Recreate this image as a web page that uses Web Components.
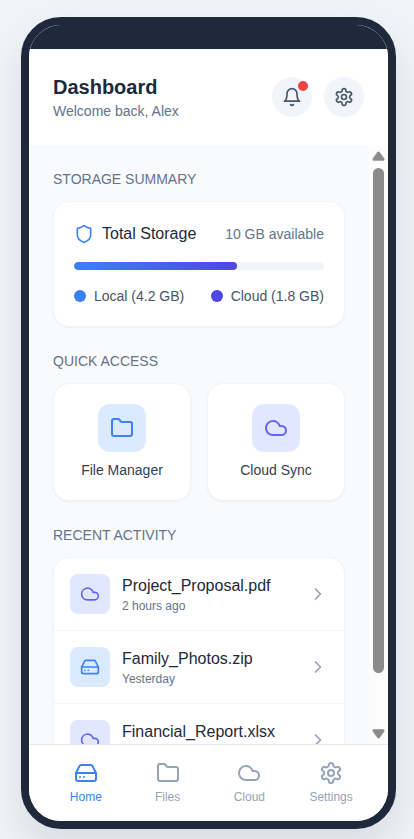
<!DOCTYPE html>
<html lang="en">
<head>
<meta charset="utf-8">
<title>Dashboard</title>
<style>
html, body { margin: 0; height: 839px; overflow: hidden; }
body {
  background: #f0f4f8;
  font-family: "Liberation Sans", Arial, sans-serif;
  display: flex;
  box-sizing: border-box;
  padding: 17px 0 0 21px;
}
</style>
</head>
<body>
<phone-frame>
  <app-header heading="Dashboard" sub="Welcome back, Alex">
    <round-button icon="bell" alert></round-button>
    <round-button icon="settings"></round-button>
  </app-header>
  <scroll-area>
    <page-section heading="Storage Summary">
      <storage-card></storage-card>
    </page-section>
    <page-section heading="Quick Access">
      <tile-grid>
        <quick-tile icon="folder" tone="blue">File Manager</quick-tile>
        <quick-tile icon="cloud" tone="indigo">Cloud Sync</quick-tile>
      </tile-grid>
    </page-section>
    <page-section heading="Recent Activity">
      <activity-list>
        <activity-item icon="cloud" tone="indigo" when="2 hours ago">Project_Proposal.pdf</activity-item>
        <activity-item icon="drive" tone="blue" when="Yesterday">Family_Photos.zip</activity-item>
        <activity-item icon="cloud" tone="indigo">Financial_Report.xlsx</activity-item>
      </activity-list>
    </page-section>
  </scroll-area>
  <bottom-nav>
    <nav-item icon="drive" active>Home</nav-item>
    <nav-item icon="folder">Files</nav-item>
    <nav-item icon="cloud">Cloud</nav-item>
    <nav-item icon="settings">Settings</nav-item>
  </bottom-nav>
</phone-frame>
<script>
const ICONS = {
  bell: '<path d="M6 8a6 6 0 0 1 12 0c0 7 3 9 3 9H3s3-2 3-9"/><path d="M10.3 21a1.94 1.94 0 0 0 3.4 0"/>',
  settings: '<path d="M12.22 2h-.44a2 2 0 0 0-2 2v.18a2 2 0 0 1-1 1.73l-.43.25a2 2 0 0 1-2 0l-.15-.08a2 2 0 0 0-2.73.73l-.22.38a2 2 0 0 0 .73 2.73l.15.1a2 2 0 0 1 1 1.72v.51a2 2 0 0 1-1 1.74l-.15.09a2 2 0 0 0-.73 2.73l.22.38a2 2 0 0 0 2.73.73l.15-.08a2 2 0 0 1 2 0l.43.25a2 2 0 0 1 1 1.73V20a2 2 0 0 0 2 2h.44a2 2 0 0 0 2-2v-.18a2 2 0 0 1 1-1.73l.43-.25a2 2 0 0 1 2 0l.15.08a2 2 0 0 0 2.73-.73l.22-.39a2 2 0 0 0-.73-2.73l-.15-.08a2 2 0 0 1-1-1.74v-.5a2 2 0 0 1 1-1.74l.15-.09a2 2 0 0 0 .73-2.73l-.22-.38a2 2 0 0 0-2.73-.73l-.15.08a2 2 0 0 1-2 0l-.43-.25a2 2 0 0 1-1-1.73V4a2 2 0 0 0-2-2z"/><circle cx="12" cy="12" r="3"/>',
  shield: '<path d="M20 13c0 5-3.5 7.5-7.66 8.95a1 1 0 0 1-.67-.01C7.5 20.5 4 18 4 13V6a1 1 0 0 1 1-1c2 0 4.5-1.2 6.24-2.72a1.17 1.17 0 0 1 1.52 0C14.51 3.81 17 5 19 5a1 1 0 0 1 1 1z"/>',
  folder: '<path d="M20 20a2 2 0 0 0 2-2V8a2 2 0 0 0-2-2h-7.9a2 2 0 0 1-1.69-.9L9.6 3.9A2 2 0 0 0 7.93 3H4a2 2 0 0 0-2 2v13a2 2 0 0 0 2 2Z"/>',
  cloud: '<path d="M17.5 19H9a7 7 0 1 1 6.71-9h1.79a4.5 4.5 0 1 1 0 9Z"/>',
  drive: '<line x1="22" x2="2" y1="12" y2="12"/><path d="M5.45 5.11 2 12v6a2 2 0 0 0 2 2h16a2 2 0 0 0 2-2v-6l-3.45-6.89A2 2 0 0 0 16.76 4H7.24a2 2 0 0 0-1.79 1.11z"/><line x1="6" x2="6.01" y1="16" y2="16"/><line x1="10" x2="10.01" y1="16" y2="16"/>',
  chevron: '<path d="m9 18 6-6-6-6"/>'
};

const define = (name, render) => customElements.define(name, class extends HTMLElement {
  connectedCallback() {
    if (this.shadowRoot) return;
    this.attachShadow({ mode: 'open' }).innerHTML = render(this);
  }
});
const attr = (el, name) => el.getAttribute(name) || '';

define('line-icon', el => `<style>
  :host { display: block; flex: none; width: var(--size, 20px); height: var(--size, 20px); }
  svg { display: block; width: 100%; height: 100%; }
</style><svg viewBox="0 0 24 24" fill="none" stroke="currentColor" stroke-width="2" stroke-linecap="round" stroke-linejoin="round">${ICONS[attr(el, 'name')]}</svg>`);

define('phone-frame', () => `<style>
  :host { display: flex; flex-direction: column; flex: none; box-sizing: border-box; width: 375px; height: 812px;
    border: 8px solid #1e293b; border-radius: 40px; overflow: hidden; background: #fff;
    box-shadow: 0 20px 40px rgba(0,0,0,.1); }
  .status { flex: none; height: 24px; background: #1e293b; }
</style><div class="status"></div><slot></slot>`);

define('app-header', el => `<style>
  :host { display: flex; flex: none; justify-content: space-between; align-items: center; padding: 24px; background: #fff; }
  h1 { margin: 0; font-size: 20px; line-height: 28px; font-weight: 700; color: #1e293b; }
  p { margin: 0; font-size: 14px; line-height: 20px; color: #64748b; }
  .actions { display: flex; gap: 12px; }
</style><div><h1>${attr(el, 'heading')}</h1><p>${attr(el, 'sub')}</p></div><div class="actions"><slot></slot></div>`);

define('round-button', el => `<style>
  :host { position: relative; display: grid; place-items: center; width: 40px; height: 40px; border-radius: 50%;
    background: #f1f5f9; color: #475569; }
  .dot { position: absolute; top: 4px; right: 4px; width: 10px; height: 10px; border-radius: 50%; background: #ef4444; }
</style><line-icon name="${attr(el, 'icon')}"></line-icon>${el.hasAttribute('alert') ? '<span class="dot"></span>' : ''}`);

define('scroll-area', () => `<style>
  :host { display: flex; flex: 1; min-height: 0; overflow: hidden; background: #f8fafc; }
  .content { flex: 1; min-width: 0; padding: 24px; display: flex; flex-direction: column; gap: 24px; }
  .bar { flex: none; box-sizing: border-box; width: 19px; background: #fcfcfc; padding: 6px 0 5px;
    display: flex; flex-direction: column; align-items: center; }
  .thumb { width: 11px; height: 505px; margin-top: 7px; border-radius: 5.5px; background: #8b8b8b; }
  svg { display: block; width: 13px; height: 10px; fill: #8b8b8b; }
  .down { margin-top: auto; }
</style><div class="content"><slot></slot></div>
<div class="bar">
  <svg viewBox="0 0 13 10"><path d="M5.3 1.2Q6.5-.2 7.7 1.2L12.3 7.6Q12.8 9.7 11.3 9.8H1.7Q.2 9.7.7 7.6Z"/></svg>
  <div class="thumb"></div>
  <svg class="down" viewBox="0 0 13 10"><path d="M5.3 8.8Q6.5 10.2 7.7 8.8L12.3 2.4Q12.8 .3 11.3 .2H1.7Q.2 .3 .7 2.4Z"/></svg>
</div>`);

define('page-section', el => `<style>
  :host { display: block; flex: none; }
  h2 { margin: 0 0 12px; font-size: 14px; line-height: 20px; font-weight: 400; color: #64748b; text-transform: uppercase; }
</style><h2>${attr(el, 'heading')}</h2><slot></slot>`);

const CARD = `box-sizing: border-box; background: #fff; border: 1px solid #f1f5f9; border-radius: 16px; box-shadow: 0 1px 2px rgba(0,0,0,.05);`;

define('storage-card', () => `<style>
  :host { display: flex; flex-direction: column; gap: 16px; padding: 20px; ${CARD} font-size: 14px; line-height: 20px; }
  .row, .name, .key { display: flex; align-items: center; }
  .row { justify-content: space-between; }
  .name { gap: 8px; font-size: 16px; line-height: 24px; color: #1e293b; }
  line-icon { color: #3b82f6; }
  .free { color: #64748b; }
  .track { height: 8px; border-radius: 4px; background: #f1f5f9; overflow: hidden; }
  .fill { height: 100%; width: 65%; border-radius: 4px; background: linear-gradient(90deg, #3b82f6, #4f46e5); }
  .key { gap: 8px; color: #475569; }
  .key i { width: 12px; height: 12px; border-radius: 50%; background: #3b82f6; }
  .key.cloud i { background: #4f46e5; }
</style>
<div class="row"><div class="name"><line-icon name="shield"></line-icon><span>Total Storage</span></div><span class="free">10 GB available</span></div>
<div class="track"><div class="fill"></div></div>
<div class="row"><div class="key"><i></i><span>Local (4.2 GB)</span></div><div class="key cloud"><i></i><span>Cloud (1.8 GB)</span></div></div>`);

define('tile-grid', () => `<style>
  :host { display: grid; grid-template-columns: 1fr 1fr; gap: 16px; }
</style><slot></slot>`);

define('icon-badge', el => `<style>
  :host { display: grid; place-items: center; flex: none; }
  :host([tone=blue]) { background: #dbeafe; color: #3b82f6; }
  :host([tone=indigo]) { background: #e0e7ff; color: #6366f1; }
</style><line-icon name="${attr(el, 'icon')}"></line-icon>`);

define('quick-tile', el => `<style>
  :host { display: flex; flex-direction: column; align-items: center; gap: 8px; padding: 20px; ${CARD}
    font-size: 14px; line-height: 20px; color: #334155; }
  icon-badge { width: 48px; height: 48px; border-radius: 12px; --size: 24px; }
</style><icon-badge icon="${attr(el, 'icon')}" tone="${attr(el, 'tone')}"></icon-badge><span><slot></slot></span>`);

define('activity-list', () => `<style>
  :host { display: block; ${CARD} overflow: hidden; }
</style><slot></slot>`);

define('activity-item', el => `<style>
  :host { display: flex; align-items: center; gap: 12px; padding: 16px; border-bottom: 1px solid #f1f5f9; }
  :host(:last-child) { border-bottom: 0; }
  icon-badge { width: 40px; height: 40px; border-radius: 8px; }
  .text { flex: 1; min-width: 0; }
  .title { font-size: 16px; line-height: 24px; color: #1e293b; }
  .when { font-size: 12px; line-height: 16px; min-height: 16px; color: #64748b; }
  .go { color: #94a3b8; }
</style><icon-badge icon="${attr(el, 'icon')}" tone="${attr(el, 'tone')}"></icon-badge>
<div class="text"><div class="title"><slot></slot></div><div class="when">${attr(el, 'when')}</div></div>
<line-icon class="go" name="chevron"></line-icon>`);

define('bottom-nav', () => `<style>
  :host { display: flex; flex: none; padding: 16px; border-top: 1px solid #e2e8f0; background: #fff; }
</style><slot></slot>`);

define('nav-item', el => `<style>
  :host { display: flex; flex: 1 1 0; flex-direction: column; align-items: center; gap: 4px; font-size: 12px; line-height: 16px;
    color: #94a3b8; --size: 24px; }
  :host([active]) { color: #3b82f6; }
</style><line-icon name="${attr(el, 'icon')}"></line-icon><span><slot></slot></span>`);
</script>
</body>
</html>
